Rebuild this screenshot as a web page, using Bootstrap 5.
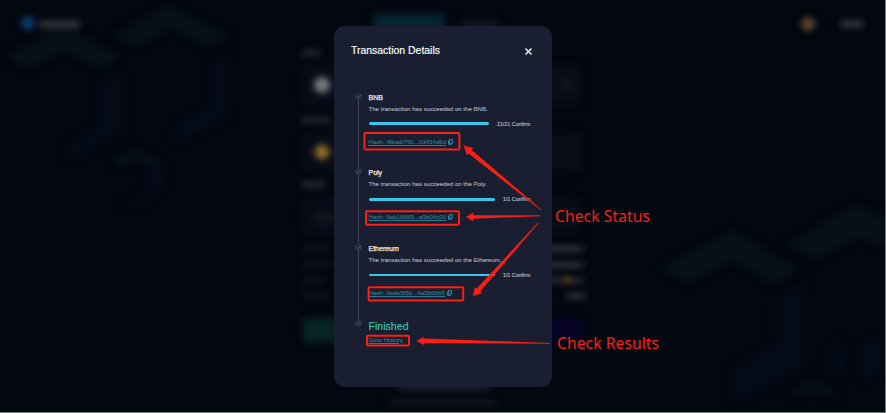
<!DOCTYPE html>
<html lang="en">
<head>
<meta charset="utf-8">
<meta name="viewport" content="width=device-width, initial-scale=1">
<title>Transaction Details</title>
<link rel="stylesheet" href="https://cdn.jsdelivr.net/npm/bootstrap@5.3.0/dist/css/bootstrap.min.css">
<style>
body{background:#03070f;font-family:"Liberation Sans",Arial,sans-serif;height:413px;border-bottom:1px solid #6f7a78;border-right:1px solid #777b80}
.scenery{z-index:0}
.tx-dialog{width:218.5px;height:360.5px;margin-left:333.5px;margin-top:26px;background:#191f31;border-radius:11px;z-index:1;padding:17px 17px 0 17.5px}
.tx-title{font-size:10.45px;line-height:16px;color:#fff;-webkit-text-stroke:.15px #fff}
.tx-close{width:7px;height:7px;margin-right:3.5px}
.tx-steps{margin-top:33.5px;padding-left:.5px}
.tx-step{height:75.75px}
.tx-rail{width:13.5px;margin-right:3.5px}
.tx-rail svg{width:7px;height:7px}
.tx-line{width:1px;background:#414758}
.tx-name{font-size:7px;line-height:9px;color:#eceef2;-webkit-text-stroke:.25px #eceef2}
.tx-desc{font-size:6.1px;line-height:8px;margin-top:3px;color:#a5a8b2;-webkit-text-stroke:.15px #a5a8b2;white-space:nowrap}
.tx-progress{height:6px;margin-top:8px;width:162px}
.tx-bar{height:2.5px;border-radius:2px;background:#3bc7ec}
.tx-count{font-size:5.35px;line-height:6px;color:#b4b7c1;-webkit-text-stroke:.15px #b4b7c1}
.tx-hash{font-size:6.2px;line-height:8px;margin-top:11px;white-space:nowrap}
.tx-hash a,.tx-history{color:#2e7b91;text-decoration:underline;-webkit-text-stroke:.12px #2e7b91}
.tx-hash svg{width:5px;height:6px;margin-left:2px}
.tx-done{font-size:10.6px;line-height:12px;color:#2fc8b6;-webkit-text-stroke:.12px #2fc8b6}
.tx-history{font-size:6.2px;line-height:8px;margin-top:4px}
.notes{z-index:2}
.notes text{font-family:"Noto Sans","Open Sans",sans-serif;font-size:15.7px;fill:#fa1e14}
</style>
<script src="https://cdn.jsdelivr.net/npm/bootstrap@5.3.0/dist/js/bootstrap.bundle.min.js"></script>
</head>
<body class="position-relative overflow-hidden m-0">
<!-- Dimmed, out-of-focus bridge page behind the dialog -->
<svg class="scenery position-absolute top-0 start-0" width="885" height="412" viewBox="0 0 885 412" aria-hidden="true">
  <defs>
    <filter id="soft" x="-30%" y="-30%" width="160%" height="160%" color-interpolation-filters="sRGB"><feGaussianBlur stdDeviation="3.5"/></filter>
    <filter id="near" x="-30%" y="-50%" width="160%" height="200%" color-interpolation-filters="sRGB"><feGaussianBlur stdDeviation="3"/></filter>
  </defs>
  <g filter="url(#soft)">
    <g fill="#061017">
      <path d="M5 56 65 26 122 57 100 69 64 50 28 69Z"/>
      <path d="M112 35 170 4 230 35 206 48 170 28 136 48Z"/>
      <path d="M110 160 135 149 164 163 150 167 135 160 119 168Z"/>
      <path d="M660 267 731 230 800 268 774 285 731 261 688 285Z"/>
      <path d="M787 243 857 203 892 222V250L857 238 815 260Z"/>
      <path d="M787 394 815 378 843 398 815 392Z"/>
    </g>
    <g fill="#040b18">
      <path d="M99 84 121 72V132L69 162V144L99 126Z"/>
      <path d="M211 64 230 52V115L176 146V124L211 105Z"/>
      <path d="M149 168 163 162V188L143 205H120L149 190Z"/>
      <path d="M776 298 806 283V365L732 405V368L776 344Z"/>
      <path d="M831 343 843 340V372L831 376ZM856 348 885 332V370L862 382Z"/>
    </g>
  </g>
  <g filter="url(#near)">
    <circle cx="28" cy="23" r="7" fill="#0b3c6c"/><rect x="39" y="20" width="41" height="9" rx="3" fill="#2d2f36"/>
    <rect x="373" y="14" width="72" height="17" rx="4" fill="#072431"/><rect x="463" y="20" width="35" height="7" fill="#14171f"/>
    <circle cx="808" cy="24" r="7" fill="#5b452f"/><path d="m816 22 3 3 3-3Z" fill="#252936"/><rect x="840" y="20" width="24" height="8" fill="#2b2f38"/>
    <g fill="#080c17">
      <rect x="303" y="64" width="278" height="41" rx="5"/>
      <rect x="303" y="131" width="278" height="42" rx="5"/>
      <rect x="303" y="198" width="278" height="35" rx="5"/>
    </g>
    <g fill="#24272f">
      <rect x="302" y="50" width="18" height="6"/><rect x="302" y="117" width="29" height="6"/><rect x="302" y="181" width="24" height="7"/>
    </g>
    <circle cx="322" cy="85" r="8" fill="#77777a"/><circle cx="322" cy="152" r="7.5" fill="#8d6b27"/><rect x="316" y="214" width="18" height="7" fill="#171920"/>
    <circle cx="567" cy="84" r="5" fill="#151922"/>
    <g fill="#11151e">
      <rect x="303" y="246" width="26" height="5"/><rect x="303" y="262" width="28" height="5"/><rect x="303" y="278" width="22" height="5"/><rect x="303" y="293" width="26" height="5"/>
    </g>
    <g fill="#30333a">
      <rect x="540" y="246" width="43" height="6"/><rect x="540" y="262" width="43" height="6"/><rect x="540" y="278" width="43" height="5"/><rect x="567" y="293" width="18" height="6"/>
    </g>
    <circle cx="567" cy="280" r="4" fill="#54421a"/>
    <rect x="303" y="318" width="90" height="25" rx="4" fill="#072422"/>
    <rect x="492" y="318" width="90" height="25" rx="4" fill="#070325"/>
    <rect x="397" y="384" width="94" height="7" fill="#1b1f27"/><rect x="389" y="400" width="107" height="6" fill="#11151e"/>
  </g>
</svg>

<div class="d-flex">
<main class="tx-dialog position-relative" role="dialog" aria-label="Transaction Details">
  <header class="d-flex justify-content-between align-items-center">
    <div class="tx-title">Transaction Details</div>
    <svg class="tx-close" viewBox="0 0 7 7" aria-label="Close"><path d="m.5.5 6 6m0-6-6 6" stroke="#fff" stroke-width="1.35"/></svg>
  </header>
  <div class="tx-steps">
    <section class="tx-step d-flex">
      <div class="tx-rail d-flex flex-column align-items-center">
        <svg class="flex-shrink-0" viewBox="0 0 7 7"><circle cx="3.5" cy="3.5" r="2.8" fill="none" stroke="#4b5366" stroke-width=".7"/><path d="m2 3.5 1.1 1.1 2.2-2.3" fill="none" stroke="#2b94ae" stroke-width=".9"/></svg>
        <div class="tx-line flex-grow-1"></div>
      </div>
      <div>
        <div class="tx-name">BNB</div>
        <div class="tx-desc">The transaction has succeeded on the BNB.</div>
        <div class="tx-progress d-flex align-items-center justify-content-between"><div class="tx-bar" style="width:120.5px"></div><span class="tx-count">21/21 Confirm</span></div>
        <div class="tx-hash d-flex align-items-center"><a href="#">Hash: 48cab790...03454d6d</a><svg viewBox="0 0 5 6"><path d="M1.4.6h3v3.6h-3zM.6 1.6v3.8h2.9" fill="none" stroke="#3ba3bd" stroke-width=".8"/></svg></div>
      </div>
    </section>
    <section class="tx-step d-flex">
      <div class="tx-rail d-flex flex-column align-items-center">
        <svg class="flex-shrink-0" viewBox="0 0 7 7"><circle cx="3.5" cy="3.5" r="2.8" fill="none" stroke="#4b5366" stroke-width=".7"/><path d="m2 3.5 1.1 1.1 2.2-2.3" fill="none" stroke="#2b94ae" stroke-width=".9"/></svg>
        <div class="tx-line flex-grow-1"></div>
      </div>
      <div>
        <div class="tx-name">Poly</div>
        <div class="tx-desc">The transaction has succeeded on the Poly.</div>
        <div class="tx-progress d-flex align-items-center justify-content-between"><div class="tx-bar" style="width:126px"></div><span class="tx-count">1/1 Confirm</span></div>
        <div class="tx-hash d-flex align-items-center"><a href="#">Hash: 6ab16889...a9b04c00</a><svg viewBox="0 0 5 6"><path d="M1.4.6h3v3.6h-3zM.6 1.6v3.8h2.9" fill="none" stroke="#3ba3bd" stroke-width=".8"/></svg></div>
      </div>
    </section>
    <section class="tx-step d-flex">
      <div class="tx-rail d-flex flex-column align-items-center">
        <svg class="flex-shrink-0" viewBox="0 0 7 7"><circle cx="3.5" cy="3.5" r="2.8" fill="none" stroke="#4b5366" stroke-width=".7"/><path d="m2 3.5 1.1 1.1 2.2-2.3" fill="none" stroke="#2b94ae" stroke-width=".9"/></svg>
        <div class="tx-line flex-grow-1"></div>
      </div>
      <div>
        <div class="tx-name">Ethereum</div>
        <div class="tx-desc">The transaction has succeeded on the Ethereum.</div>
        <div class="tx-progress d-flex align-items-center justify-content-between"><div class="tx-bar" style="width:126px"></div><span class="tx-count">1/1 Confirm</span></div>
        <div class="tx-hash d-flex align-items-center"><a href="#">Hash: 0ade5f5b...4a5b9bb5</a><svg viewBox="0 0 5 6"><path d="M1.4.6h3v3.6h-3zM.6 1.6v3.8h2.9" fill="none" stroke="#3ba3bd" stroke-width=".8"/></svg></div>
      </div>
    </section>
    <section class="d-flex">
      <div class="tx-rail d-flex flex-column align-items-center">
        <svg class="flex-shrink-0" viewBox="0 0 7 7"><circle cx="3.5" cy="3.5" r="2.8" fill="none" stroke="#4b5366" stroke-width=".7"/><path d="m2 3.5 1.1 1.1 2.2-2.3" fill="none" stroke="#2b94ae" stroke-width=".9"/></svg>
      </div>
      <div>
        <div class="tx-done">Finished</div>
        <a class="tx-history d-block" href="#">Goto History</a>
      </div>
    </section>
  </div>
</main>
</div>

<!-- Callouts drawn over the dialog -->
<svg class="notes position-absolute top-0 start-0 pe-none" width="886" height="413" viewBox="0 0 886 413">
  <g fill="none" stroke="#fa1e14" stroke-width="2">
    <rect x="364.4" y="133" width="95" height="16.4" rx="1"/>
    <rect x="366" y="211.2" width="93" height="13.6" rx="1"/>
    <rect x="368.6" y="287.2" width="94.6" height="13.2" rx="1"/>
    <rect x="367" y="335.8" width="42" height="9.8" rx="1"/>
  </g>
  <g fill="#fa1e14">
    <path d="M463.5 145.5 473 148 471.7 150 541.2 209.4 540.6 210 468.6 153.6 467 155.4Z"/>
    <path d="M466 217 473.2 212.6V215.3L540 215.3V216.2L473.2 218.7V221.2Z"/>
    <path d="M473 296 474.8 287 476.8 288.6 538.2 222.2 538.8 222.8 480.2 291.6 482.2 293.3Z"/>
    <path d="M416.5 341 424 336.8 423.6 338.4 550.3 343 550.3 343.8 424 343.2 424.4 345.2Z"/>
  </g>
  <text x="555" y="222" textLength="95">Check Status</text>
  <text x="557" y="348.5" textLength="102">Check Results</text>
</svg>
</body>
</html>
